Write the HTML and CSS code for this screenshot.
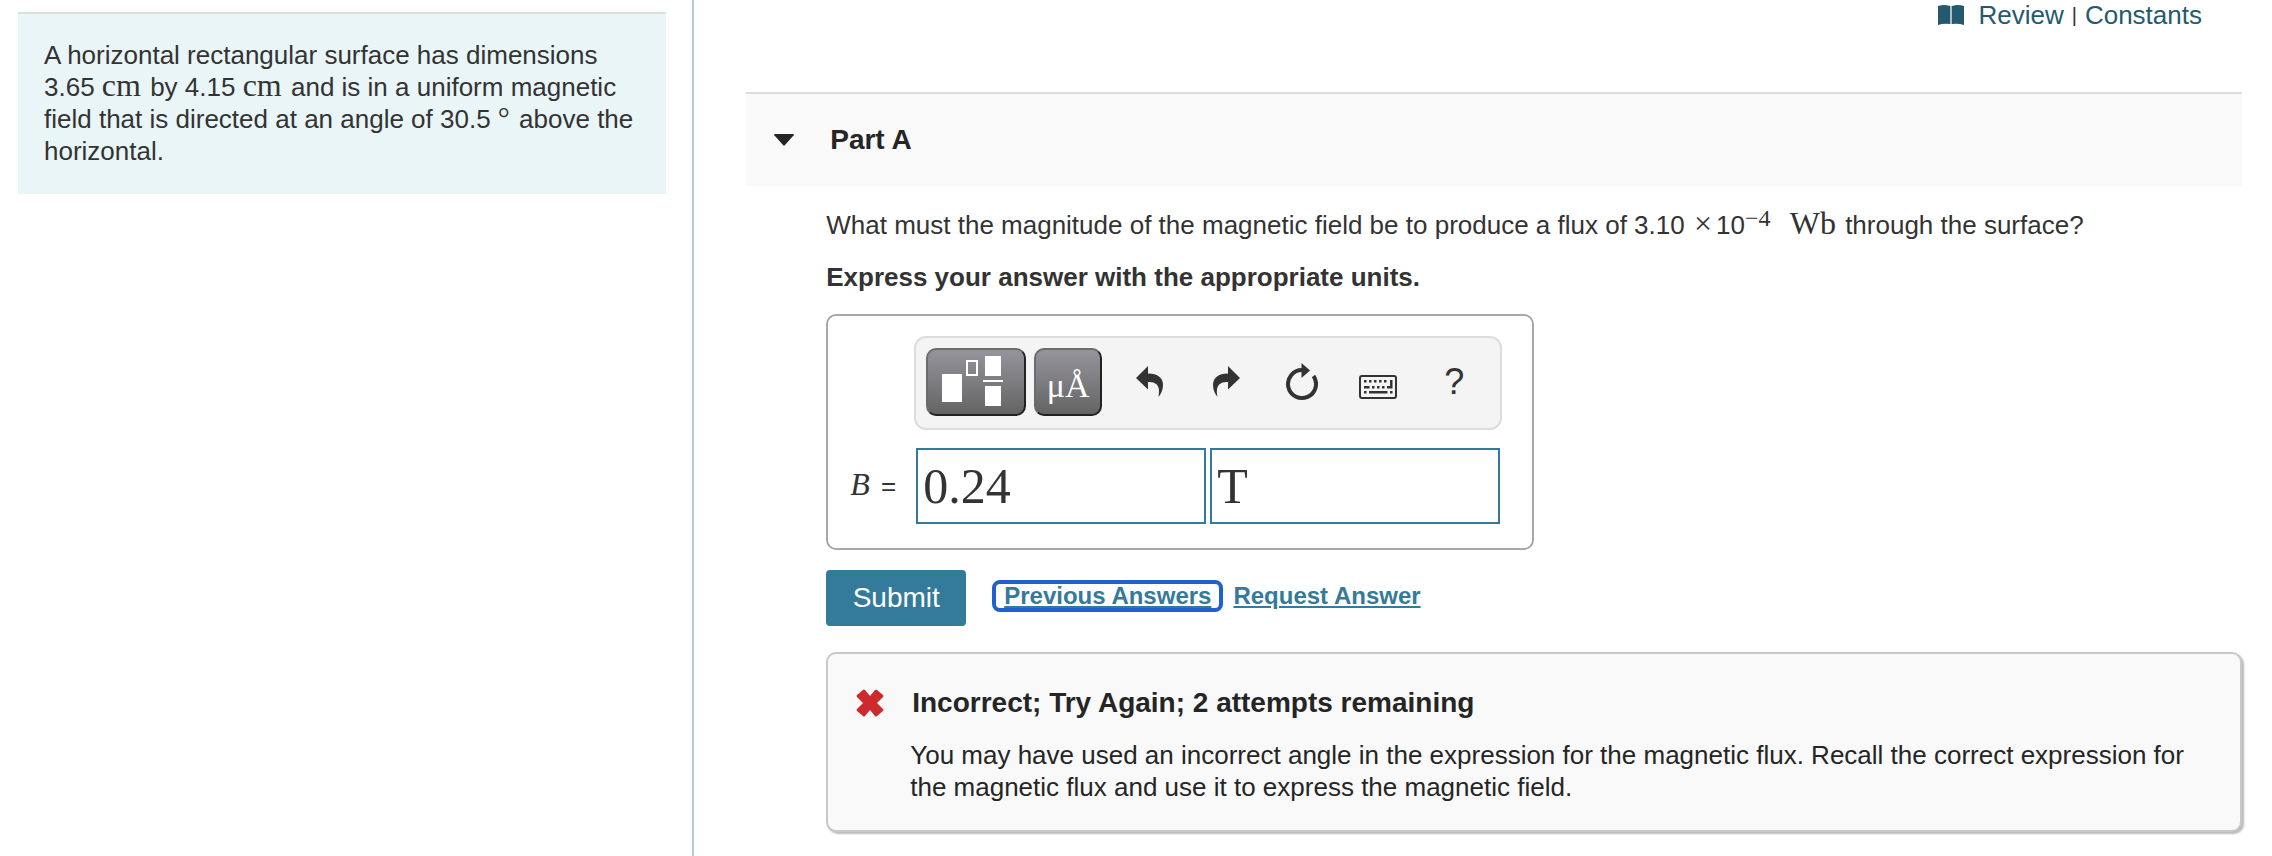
FILE: index.html
```html
<!DOCTYPE html>
<html lang="en">
<head>
    <meta charset="utf-8">
    <title>Part A - Magnetic Flux</title>
    <meta name="viewport" content="width=device-width, initial-scale=1">
    <link rel="stylesheet" href="styles.css">
</head>
<body>
    <div class="page">
        <aside class="problem">
            <div class="problem-text">
                A horizontal rectangular surface has dimensions 3.65&nbsp;<span class="math cm">cm</span> by 4.15&nbsp;<span class="math cm">cm</span> and is in a uniform magnetic field that is directed at an angle of 30.5&nbsp;<span class="math degree">°</span> above the horizontal.
            </div>
        </aside>

        <main class="content">
            <nav class="top-links">
                <svg class="book" width="26" height="20" viewBox="0 0 26 20">
                    <path fill="#24596e" d="M0 1Q6-1 12 1V19Q6 18 0 20ZM14 1Q20-1 26 1V20Q20 18 14 19Z"/>
                    <path fill="#a9c0ca" d="M12 1h2v18h-2z"/>
                </svg>
                <a href="#">Review</a>
                <span class="sep">|</span>
                <a href="#">Constants</a>
            </nav>

            <header class="part-header">
                <svg width="20" height="12" viewBox="0 0 20 12">
                    <path fill="#252525" d="M1 0H19Q21 1 19 2L11 11Q10 12 9 11L1 2Q-1 1 1 0Z"/>
                </svg>
                <h2>Part A</h2>
            </header>

            <section class="part-body">
                <p class="question">What must the magnitude of the magnetic field be to produce a flux of 3.10 <span class="math times">×</span>10<sup class="math">−4</sup> <span class="math unit">Wb</span> through the surface?</p>
                <p class="instructions">Express your answer with the appropriate units.</p>

                <form class="answer-box">
                    <div class="toolbar">
                        <button type="button" class="tool template" aria-label="Templates">
                            <svg width="62" height="50" viewBox="0 0 62 50">
                                <path fill="#fff" d="M0 18h20v28H0zM43 0h16v20H43zM41 24h20v2H41zM43 30h16v20H43z"/>
                                <path fill="none" stroke="#fff" stroke-width="2" d="M25 5h10v14H25z"/>
                            </svg>
                        </button>
                        <button type="button" class="tool units" aria-label="Units">μÅ</button>
                        <button type="button" class="icon" aria-label="Undo">
                            <svg width="28" height="32" viewBox="0 0 28 32">
                                <path fill="#333" d="M0 12L12 0V7.500C22 7.500 27 12 27 19C27 24 25 28 22.500 31C24 22 23 16 12 16V23.500Z"/>
                            </svg>
                        </button>
                        <button type="button" class="icon" aria-label="Redo">
                            <svg width="28" height="32" viewBox="0 0 28 32">
                                <path fill="#333" d="M28 12L16 0V7.500C6 7.500 1 12 1 19C1 24 3 28 5.500 31C4 22 5 16 16 16V23.500Z"/>
                            </svg>
                        </button>
                        <button type="button" class="icon" aria-label="Reset">
                            <svg width="32" height="38" viewBox="0 0 32 38">
                                <path fill="none" stroke="#333" stroke-width="4" d="M16 7A14 14 0 1 0 27.500 13"/>
                                <path fill="#333" d="M15.500 0L24 7.500L15.500 15Z"/>
                            </svg>
                        </button>
                        <button type="button" class="icon keyboard" aria-label="Keyboard">
                            <svg width="38" height="24" viewBox="0 0 38 24">
                                <rect x="1" y="1" width="36" height="22" rx="2" fill="none" stroke="#333" stroke-width="2"/>
                                <g fill="#333">
                                    <path d="M5 5h2.500v2.500H5zM10 5h2.500v2.500H10zM15 5h2.500v2.500H15zM20 5h2.500v2.500H20zM25 5h2.500v2.500H25z"/>
                                    <path d="M5 11h5.500v2.500H5zM13 11h2.500v2.500H13zM18 11h2.500v2.500H18zM23 11h2.500v2.500H23zM31 5h2.500v8.500H28V11h3z"/>
                                    <path d="M5 16h2.500v2.500H5zM10 16h18.500v2.500H10zM31 16h2.500v2.500H31z"/>
                                </g>
                            </svg>
                        </button>
                        <button type="button" class="icon help" aria-label="Help">?</button>
                    </div>
                    <div class="answer-row">
                        <label for="value"><i class="math">B</i> =</label>
                        <input type="text" id="value" value="0.24">
                        <input type="text" id="unit" value="T" aria-label="Units">
                    </div>
                </form>

                <div class="actions">
                    <button type="button" class="submit">Submit</button>
                    <a href="#" class="previous">Previous Answers</a>
                    <a href="#">Request Answer</a>
                </div>

                <div class="feedback">
                    <svg class="cross" width="28" height="28" viewBox="0 0 28 28">
                        <path fill="#cc2a2c" d="M7 1Q8 0 9 1L14 7L19 1Q20 0 21 1L27 6Q28 7 27 8L21 14L27 20Q28 21 27 22L21 27Q20 28 19 27L14 21L9 27Q8 28 7 27L1 22Q0 21 1 20L7 14L1 8Q0 7 1 6Z"/>
                    </svg>
                    <div>
                        <h3>Incorrect; Try Again; 2 attempts remaining</h3>
                        <p>You may have used an incorrect angle in the expression for the magnetic flux. Recall the correct expression for the magnetic flux and use it to express the magnetic field.</p>
                    </div>
                </div>
            </section>
        </main>
    </div>
</body>
</html>
```
FILE: styles.css
```css
* {
    box-sizing: border-box;
}

body {
    margin: 0;
    font-family: "Liberation Sans", Arial, sans-serif;
    font-size: 26px;
    line-height: 32px;
    color: #333;
    background-color: #fff;
}

h2, h3, p {
    margin: 0;
}

.page {
    display: grid;
    grid-template-columns: 11fr 25fr;
    min-height: 100vh;
}

.problem {
    padding: 12px 26px 12px 18px;
    border-right: 2px solid #b9c9da;
}

.problem-text {
    padding: 25px 26px 27px;
    border-top: 2px solid #dcdfe0;
    background-color: #eaf5f8;
}

.math {
    font-family: "Liberation Serif", "Times New Roman", serif;
    font-size: 32px;
    line-height: 28px;
}

.cm {
    margin-right: 2px;
}

.degree {
    margin-right: 2px;
    font-size: 30px;
}

.content {
    padding: 0 30px 24px 52px;
}

.top-links {
    display: flex;
    justify-content: flex-end;
    align-items: center;
    height: 30px;
    padding-right: 40px;
}

.top-links a {
    color: #24596e;
    text-decoration: none;
}

.book {
    margin-right: 14px;
}

.sep {
    margin: 0 8px;
    font-size: 20px;
}

.part-header {
    display: flex;
    align-items: center;
    gap: 36px;
    height: 94px;
    margin-top: 62px;
    padding-left: 28px;
    border-top: 2px solid #dcdcdc;
    background-color: #f9f9f9;
    color: #252525;
}

.part-header h2 {
    font-size: 28px;
}

.part-body {
    padding: 23px 0 0 80px;
}

.question {
    margin-bottom: 20px;
}

.question sup {
    font-size: 24px;
    line-height: 16px;
    vertical-align: 8px;
}

.times {
    margin: 0 4px 0 2px;
}

.unit {
    margin: 0 2px 0 12px;
}

.instructions {
    font-weight: bold;
}

.answer-box {
    width: fit-content;
    margin-top: 21px;
    padding: 20px 30px 24px 22px;
    border: 2px solid #a8a8a8;
    border-radius: 10px;
}

.toolbar {
    display: flex;
    align-items: center;
    height: 94px;
    margin-left: 64px;
    padding: 0 0 2px 10px;
    border: 2px solid #dcdcdc;
    border-radius: 12px;
    background-color: #f4f4f4;
}

.toolbar button {
    display: flex;
    align-items: center;
    justify-content: center;
    height: 68px;
    padding: 0;
}

.tool {
    width: 68px;
    margin-right: 8px;
    border: 2px solid;
    border-color: #6c6c6c #222 #222 #6c6c6c;
    border-radius: 10px;
    background: linear-gradient(#96949c, #646464);
    color: #fff;
    font-family: "Liberation Serif", serif;
    font-size: 34px;
}

.toolbar .template {
    width: 100px;
    padding: 0 6px 2px 0;
}

.toolbar .units {
    margin-right: 10px;
    padding-top: 8px;
}

.icon {
    width: 76px;
    border: none;
    background: none;
    color: #333;
    font-family: "Liberation Sans", Arial, sans-serif;
}

.toolbar .keyboard {
    padding-top: 10px;
}

.help {
    font-size: 36px;
}

.answer-row {
    display: flex;
    align-items: center;
    gap: 4px;
    margin-top: 18px;
    padding-right: 2px;
}

.answer-row label {
    width: 62px;
}

.answer-row i {
    margin-right: 4px;
}

.answer-row input {
    width: 290px;
    height: 76px;
    padding: 0 5px;
    border: 2px solid #337a9b;
    color: #333;
    font-family: "Liberation Serif", "Times New Roman", serif;
    font-size: 50px;
}

.actions {
    display: flex;
    align-items: center;
    margin-top: 20px;
}

.actions a {
    margin-bottom: 4px;
    color: #337a9b;
    font-size: 24px;
    font-weight: bold;
    line-height: 24px;
}

.submit {
    width: 140px;
    height: 56px;
    margin-right: 26px;
    border: none;
    border-radius: 4px;
    background-color: #337a9b;
    color: #fff;
    font-family: "Liberation Sans", Arial, sans-serif;
    font-size: 28px;
}

.previous {
    margin-right: 10px;
    padding: 0 8px;
    border: 4px solid #2160cf;
    border-radius: 8px;
}

.feedback {
    display: flex;
    align-items: flex-start;
    gap: 26px;
    margin-top: 26px;
    padding: 33px 48px 27px 28px;
    border: 2px solid #c8c8c8;
    border-radius: 10px;
    background-color: #f9f9f9;
    box-shadow: 2px 2px 2px #bbb;
    color: #252525;
}

.cross {
    flex-shrink: 0;
    margin-top: 2px;
}

.feedback h3 {
    margin: 0 0 20px 2px;
    font-size: 28px;
}
```
